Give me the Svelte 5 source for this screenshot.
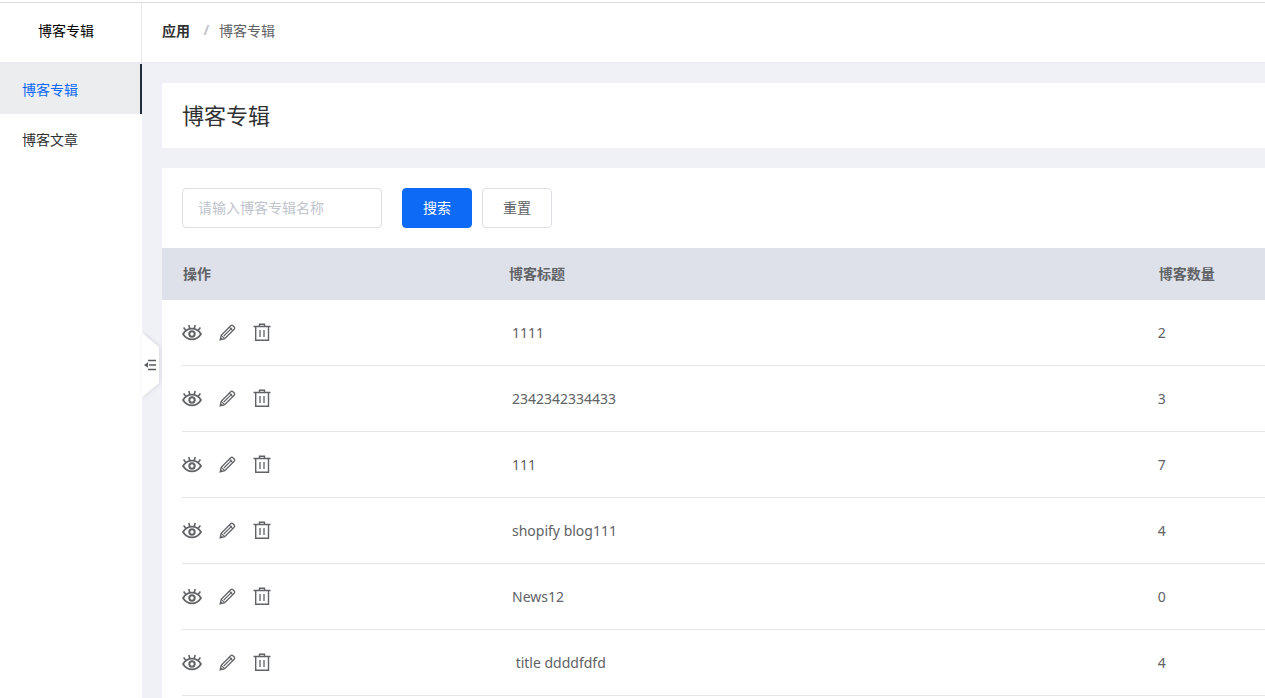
<script lang="ts">
interface Album {
  id: number, title: string, count: number
}

let keyword = $state('')
let query = $state('')
let collapsed = $state(false)

const menus = [
  { name: '博客专辑', active: true },
  { name: '博客文章', active: false }
]

const albums: Album[] = [
  { id: 1, title: '1111', count: 2 },
  { id: 2, title: '2342342334433', count: 3 },
  { id: 3, title: '111', count: 7 },
  { id: 4, title: 'shopify blog111', count: 4 },
  { id: 5, title: 'News12', count: 0 },
  { id: 6, title: ' title ddddfdfd', count: 4 }
]

const rows = $derived(albums.filter(a => a.title.includes(query)))

const search = (e: SubmitEvent) => {
  e.preventDefault()
  query = keyword
}
const reset = () => {
  keyword = ''
  query = ''
}
</script>

<div class="layout" class:collapsed>
  {#if !collapsed}
    <aside class="sidebar">
      <div class="sidebar-title">博客专辑</div>
      <nav>
        {#each menus as menu}
          <a href="#/" class="menu-item" class:active={menu.active}>{menu.name}</a>
        {/each}
      </nav>
    </aside>
  {/if}

  <div class="main">
    <header class="topbar">
      <a href="#/">应用</a>
      <span class="separator">/</span>
      <span>博客专辑</span>
    </header>

    <button class="toggle" type="button" aria-label="菜单" onclick={() => (collapsed = !collapsed)}>
      <svg class="toggle-bg" width="24" height="72" viewBox="0 0 24 72">
        <path d="M0 4 17 18V54L0 68Z" fill="#fff" />
      </svg>
      <svg class="toggle-icon" width="14" height="12" viewBox="0 0 14 12">
        <path d="M4 1.500h8M5 6h7M4 10.500h8" stroke="#5a5c60" stroke-width="1.600" fill="none" />
        <path d="M0 6 4 3.200v5.600Z" fill="#5a5c60" />
      </svg>
    </button>

    <div class="content">
      <section class="card title-card">
        <h1>博客专辑</h1>
      </section>

      <section class="card list-card">
        <form class="filter" onsubmit={search}>
          <input type="text" aria-label="博客专辑名称" placeholder="请输入博客专辑名称" bind:value={keyword} />
          <div class="buttons">
            <button class="btn primary" type="submit">搜索</button>
            <button class="btn" type="button" onclick={reset}>重置</button>
          </div>
        </form>

        <div class="table-wrap">
          <table>
            <thead>
              <tr>
                <th class="col-action">操作</th>
                <th class="col-title">博客标题</th>
                <th>博客数量</th>
              </tr>
            </thead>
            <tbody>
              {#each rows as row (row.id)}
                <tr>
                  <td>
                    <div class="actions">
                      <button type="button" aria-label="查看">
                        <svg width="20" height="20" viewBox="0 0 20 20">
                          <path d="M1 12C5.500 4.800 14.500 4.800 19 12C14.500 19.200 5.500 19.200 1 12Z" stroke-width="1.8" />
                          <circle cx="10" cy="12" r="2.700" stroke-width="2" />
                          <path d="M3.800 8.200 1.600 5.600M7.800 6.400 6.800 3M12.200 6.400 13.200 3M16.200 8.200 18.400 5.600" stroke-width="1.600" />
                        </svg>
                      </button>
                      <button type="button" aria-label="编辑">
                        <svg width="20" height="20" viewBox="0 0 20 20">
                          <path d="M3.200 17.800 4.200 13.300 13.700 3.700Q14.800 2.600 15.900 3.700L17.200 5Q18.300 6.100 17.200 7.200L7.700 16.700Z" stroke-width="1.300" />
                          <path d="M4.200 13.300 7.700 16.700M6.800 14 15 5.800M12.300 5.200 15.700 8.600" stroke-width="1.100" />
                          <path d="M3.200 17.800 3.700 15.200 5.800 17.200Z" fill="currentColor" stroke="none" />
                        </svg>
                      </button>
                      <button type="button" aria-label="删除">
                        <svg width="20" height="20" viewBox="0 0 20 20">
                          <path d="M1.500 4.500h17M7.500 4.500v-2.300h5v2.300M3.700 4.500v13.800h12.800v-13.800" stroke-width="1.400" />
                          <path d="M8 8v7M12 8v7" stroke-width="1.300" />
                        </svg>
                      </button>
                    </div>
                  </td>
                  <td class="cell-title">{row.title}</td>
                  <td>{row.count}</td>
                </tr>
              {/each}
            </tbody>
          </table>
        </div>
      </section>
    </div>
  </div>
</div>

<style>
:global(body) {
  margin: 0;
  background: #fff;
  color: #606266;
  font-family: "Noto Sans", "Noto Sans CJK SC", sans-serif;
  font-size: 14px;
}
* { box-sizing: border-box; }
a { color: inherit; text-decoration: none; }
button, input { font: inherit; color: inherit; }
button { cursor: pointer; }

.layout {
  display: grid;
  grid-template-columns: 142px minmax(0, 1fr);
  min-height: 100vh;
  padding-top: 2px;
}
.layout.collapsed { grid-template-columns: minmax(0, 1fr); }

.sidebar-title {
  display: flex;
  align-items: center;
  height: 62px;
  padding: 0 38px 6px;
  color: #000;
  border-top: 1px solid #dcdcdc;
  border-right: 1px solid #e6e8ec;
  border-bottom: 2px solid #e9ebef;
}
.menu-item {
  display: flex;
  align-items: center;
  height: 50px;
  padding: 0 22px;
  color: #303133;
}
.menu-item.active {
  color: #0d6af5;
  background: #ebedef;
  border-right: 2px solid #1f2d3d;
}

.main {
  position: relative;
  display: flex;
  flex-direction: column;
}
.topbar {
  display: flex;
  align-items: center;
  height: 61px;
  padding: 0 20px 6px;
  border-top: 1px solid #dcdcdc;
  border-bottom: 1px solid #e8ebf0;
}
.topbar a { color: #303133; font-weight: 700; }
.separator {
  width: 29px;
  padding-left: 4px;
  text-align: center;
  font-weight: 700;
  color: #c0c4cc;
}

.toggle {
  position: absolute;
  top: 327px;
  left: 0;
  width: 24px;
  height: 72px;
  padding: 0;
  border: 0;
  background: none;
}
.toggle svg { position: absolute; }
.toggle-bg { top: 0; left: 0; filter: drop-shadow(1px 0 2px rgba(0, 0, 0, .1)); }
.toggle-icon { top: 30px; left: 2px; }

.content {
  flex: 1;
  display: flex;
  flex-direction: column;
  gap: 20px;
  padding: 20px 0 0 20px;
  background: #eff1f6;
}
.card { background: #fff; }
.title-card { padding: 16px 20px; }
h1 {
  margin: 0;
  font-size: 22px;
  font-weight: 400;
  line-height: 33px;
  color: #303133;
}
.list-card { flex: 1; }
.filter {
  display: flex;
  gap: 20px;
  padding: 20px;
}
.filter input {
  width: 200px;
  height: 40px;
  padding: 0 15px 2px;
  border: 1px solid #dcdfe6;
  border-radius: 4px;
  outline: none;
}
.filter input::placeholder { color: #c0c4cc; opacity: 1; }
.buttons { display: flex; gap: 10px; }
.btn {
  height: 40px;
  padding: 0 20px 2px;
  background: #fff;
  border: 1px solid #dcdfe6;
  border-radius: 4px;
}
.btn.primary {
  color: #fff;
  background: #0d6af5;
  border-color: #0d6af5;
}

.table-wrap { padding-left: 20px; overflow: hidden; }
table {
  width: 100%;
  table-layout: fixed;
  border-collapse: separate;
  border-spacing: 0;
}
.col-action { width: 326px; box-shadow: -20px 0 0 #dee1ea; }
.col-title { width: 60%; }
th {
  height: 52px;
  padding: 0 0 2px 1px;
  text-align: left;
  font-weight: 700;
  background: #dee1ea;
}
td {
  height: 66px;
  padding: 0;
  border-bottom: 1px solid #e6e6e6;
}
.cell-title { padding-left: 4px; white-space: pre; }
.actions { display: flex; gap: 15px; padding-bottom: 1px; }
.actions button {
  display: flex;
  padding: 0;
  border: 0;
  background: none;
}
.actions svg { fill: none; stroke: currentColor; }
</style>
